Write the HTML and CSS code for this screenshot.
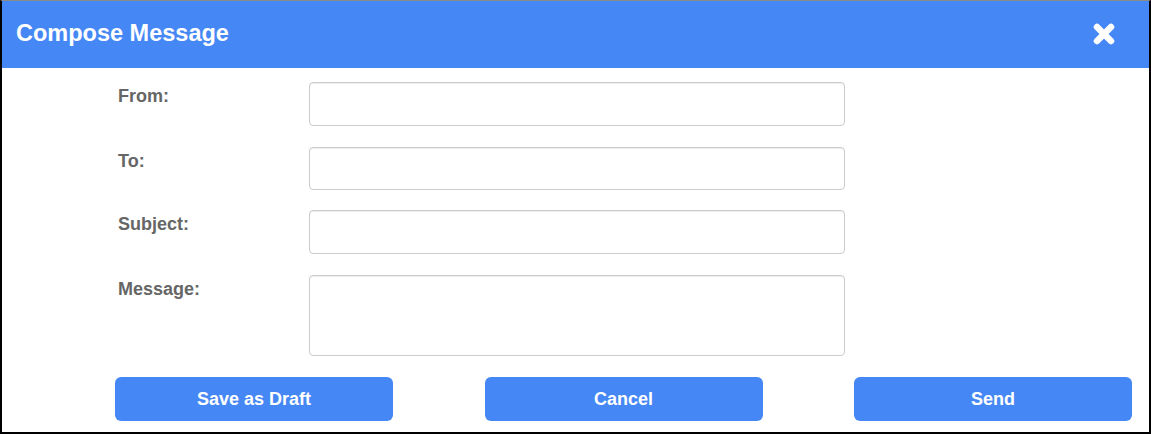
FILE: index.html
```html
<!DOCTYPE html>
<html>
<head>
<meta charset="utf-8">
<link rel="stylesheet" href="styles.css">
</head>
<body>
<div class="dialog">
  <div class="header">
    <h1 class="title">Compose Message</h1>
    <button class="close" aria-label="Close">
      <svg width="24" height="24" viewBox="0 0 24 24"><path d="M5 5 L19 19 M19 5 L5 19" stroke="#fff" stroke-width="6.5" stroke-linecap="round" fill="none"/></svg>
    </button>
  </div>
  <form class="form">
    <div class="row">
      <label class="label">From:</label>
      <input class="field" type="text">
    </div>
    <div class="row">
      <label class="label">To:</label>
      <input class="field field-to" type="text">
    </div>
    <div class="row">
      <label class="label">Subject:</label>
      <input class="field" type="text">
    </div>
    <div class="row">
      <label class="label">Message:</label>
      <textarea class="field area"></textarea>
    </div>
    <div class="actions">
      <button type="button" class="btn">Save as Draft</button>
      <button type="button" class="btn">Cancel</button>
      <button type="button" class="btn">Send</button>
    </div>
  </form>
</div>
</body>
</html>
```
FILE: styles.css
```css
html, body {
  margin: 0;
  padding: 0;
  background: #fff;
}
.dialog {
  box-sizing: border-box;
  width: 1151px;
  height: 434px;
  border: 2px solid #000;
  border-top: 1px solid #8a8a8a;
  font-family: "Liberation Sans", Arial, sans-serif;
  background: #fff;
}
.header {
  box-sizing: border-box;
  height: 67px;
  background: #4588f5;
  display: flex;
  align-items: center;
  justify-content: space-between;
  padding: 0 33px 2px 14px;
}
.title {
  margin: 0;
  color: #fff;
  font-size: 23.5px;
  font-weight: bold;
}
.close {
  border: 0;
  background: none;
  padding: 0;
  width: 24px;
  height: 24px;
  display: flex;
}
.form {
  padding: 14px 17px 0 113px;
  display: flex;
  flex-direction: column;
}
.row {
  display: grid;
  grid-template-columns: 194px 536px;
  align-items: start;
  margin-bottom: 20.5px;
}
.label {
  padding: 4px 0 0 3px;
  color: #666;
  font-size: 18px;
  font-weight: bold;
  line-height: 21px;
}
.field {
  box-sizing: border-box;
  height: 44px;
  margin: 0;
  border: 1px solid #cccccc;
  border-radius: 4px;
  box-shadow: inset 0 1px 1px rgba(0,0,0,0.075);
  background: #fff;
  font: inherit;
  outline: none;
}
.field-to {
  height: 43px;
}
.area {
  height: 81px;
  resize: none;
}
.actions {
  display: flex;
  justify-content: space-between;
  margin-top: 1px;
}
.btn {
  width: 278px;
  height: 44px;
  border: 0;
  border-radius: 6px;
  background: #4588f5;
  color: #fff;
  font-family: "Liberation Sans", Arial, sans-serif;
  font-size: 18px;
  font-weight: bold;
  padding: 0;
}
```
